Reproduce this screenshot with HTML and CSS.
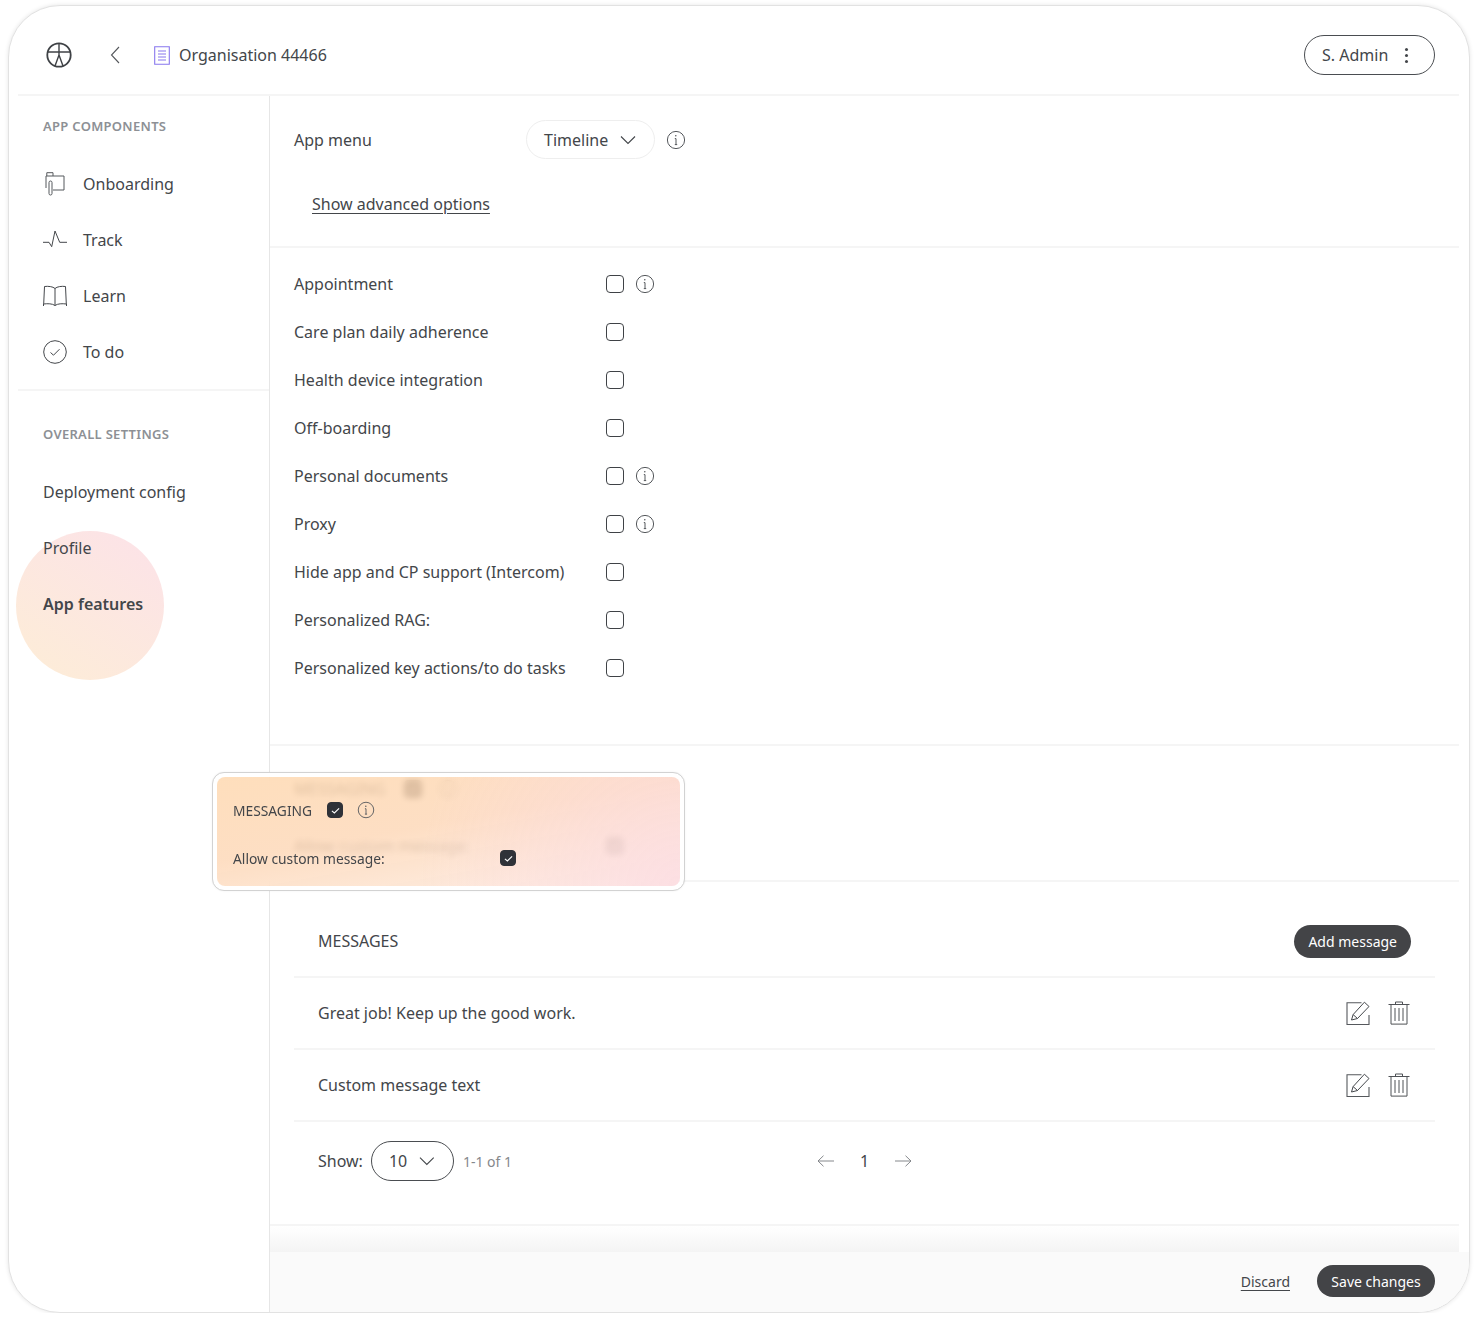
FILE: index.html
```html
<!DOCTYPE html>
<html lang="en">
<head>
    <meta charset="UTF-8">
    <title>App features</title>
    <link rel="stylesheet" href="styles.css">
</head>
<body>
    <svg class="sprites" width="0" height="0">
        <symbol id="info" viewBox="0 0 20 20">
            <circle cx="10" cy="10" r="8.6" fill="none" stroke="currentColor" stroke-width="1"/>
            <path d="M10 8.6v6M8.8 8.6H10M8.8 14.6h2.4" fill="none" stroke="currentColor" stroke-width="1"/>
            <circle cx="9.8" cy="5.8" r=".8" fill="currentColor"/>
        </symbol>
        <symbol id="chevron" viewBox="0 0 16 10">
            <path d="M1 1.5l7 7 7-7" fill="none" stroke="currentColor" stroke-width="1.1"/>
        </symbol>
        <symbol id="tick" viewBox="0 0 18 18">
            <path d="M5.2 9.4l2.6 2.2 5-4.8" fill="none" stroke="#fff" stroke-width="1.2"/>
        </symbol>
        <symbol id="edit" viewBox="0 0 24 24">
            <path d="M23 14v9.500H1V1.800h14.500" fill="none" stroke="#55585c" stroke-width="1.100"/>
            <path d="M5.500 19l1.600-5.400L18.400 1.200l4.600 4.300-11.500 12zM7.100 13.600l4.400 3.900" fill="none" stroke="#44474b" stroke-width="1"/>
        </symbol>
        <symbol id="trash" viewBox="0 0 22 24">
            <path d="M.5 3.500h21M3 3.500v19.600h16V3.500M7.500 3.200V1h7v2.200M7 7v13M11 7v13M15 7v13" fill="none" stroke="#4f5256" stroke-width="1"/>
        </symbol>
    </svg>

    <div class="frame">
        <header class="topbar">
            <svg class="logo" width="26" height="26" viewBox="0 0 26 26">
                <circle cx="13" cy="13" r="11.700" fill="none" stroke="#3f4246" stroke-width="1.800"/>
                <path d="M1.500 10h23M13 1.500V13.500M13 13L9 24M13 13l4 11" fill="none" stroke="#3f4246" stroke-width="1.400"/>
            </svg>
            <svg class="back" width="10" height="18" viewBox="0 0 10 18">
                <path d="M9 1L1.500 9 9 17" fill="none" stroke="#55585c" stroke-width="1.100"/>
            </svg>
            <svg class="doc" width="16" height="19" viewBox="0 0 16 19">
                <path d="M.7.7h14.600v17.600H.7zM4 5h8M4 8h8M4 11h8M4 14h8" fill="none" stroke="#8877ee" stroke-width="1.100"/>
            </svg>
            <span class="org-name">Organisation 44466</span>
            <button class="user-btn">S. Admin <span class="dots"><i></i><i></i><i></i></span></button>
        </header>

        <div class="layout">
            <aside class="sidebar">
                <div class="blob"></div>
                <div class="side-group">
                    <h4>APP COMPONENTS</h4>
                    <a class="side-item">
                        <svg width="24" height="24" viewBox="0 0 24 24">
                            <path d="M3 16V4M3.800 4V.7H10V4M3 4h18v14H10" fill="none" stroke="#55585c" stroke-width="1"/>
                            <rect x="6" y="9" width="3" height="14" rx="1.500" fill="none" stroke="#55585c" stroke-width="1"/>
                        </svg>
                        Onboarding
                    </a>
                    <a class="side-item">
                        <svg width="24" height="24" viewBox="0 0 24 24">
                            <path d="M0 14.300h6l2.700 4.400L12 3l4.700 11.300H24" fill="none" stroke="#44474b" stroke-width="1"/>
                        </svg>
                        Track
                    </a>
                    <a class="side-item">
                        <svg width="24" height="24" viewBox="0 0 24 24">
                            <path d="M12 4.500C10 2.500 5 2 1.500 2.500L.7 20c4-.5 8.500-.5 11.300 1.500 2.800-2 7.300-2 11.300-1.500l-.8-17.500C19 2 14 2.500 12 4.500zM12 4.500v17M.5 20v2M23.500 20v2" fill="none" stroke="#44474b" stroke-width="1"/>
                        </svg>
                        Learn
                    </a>
                    <a class="side-item">
                        <svg width="24" height="24" viewBox="0 0 24 24">
                            <circle cx="12" cy="12" r="11.300" fill="none" stroke="#44474b" stroke-width="1"/>
                            <path d="M7.500 12.500l3 2.700 6-6" fill="none" stroke="#44474b" stroke-width="1"/>
                        </svg>
                        To do
                    </a>
                </div>
                <div class="side-group">
                    <h4>OVERALL SETTINGS</h4>
                    <a class="side-item">Deployment config</a>
                    <a class="side-item">Profile</a>
                    <a class="side-item active">App features</a>
                </div>
            </aside>

            <main class="content">
                <section class="menu-section">
                    <div class="menu-row">
                        <span class="menu-label">App menu</span>
                        <div class="pill-select">Timeline <svg width="16" height="10"><use href="#chevron"/></svg></div>
                        <svg class="info" width="20" height="20"><use href="#info"/></svg>
                    </div>
                    <a class="advanced">Show advanced options</a>
                </section>

                <section class="features">
                    <div class="feature"><span>Appointment</span><b class="check"></b><svg class="info" width="20" height="20"><use href="#info"/></svg></div>
                    <div class="feature"><span>Care plan daily adherence</span><b class="check"></b></div>
                    <div class="feature"><span>Health device integration</span><b class="check"></b></div>
                    <div class="feature"><span>Off-boarding</span><b class="check"></b></div>
                    <div class="feature"><span>Personal documents</span><b class="check"></b><svg class="info" width="20" height="20"><use href="#info"/></svg></div>
                    <div class="feature"><span>Proxy</span><b class="check"></b><svg class="info" width="20" height="20"><use href="#info"/></svg></div>
                    <div class="feature"><span>Hide app and CP support (Intercom)</span><b class="check"></b></div>
                    <div class="feature"><span>Personalized RAG:</span><b class="check"></b></div>
                    <div class="feature"><span>Personalized key actions/to do tasks</span><b class="check"></b></div>
                </section>

                <section class="messaging">
                    <div class="msg-title">MESSAGING <b class="check on"><svg width="18" height="18"><use href="#tick"/></svg></b><svg class="info" width="20" height="20"><use href="#info"/></svg></div>
                    <div class="feature"><span>Allow custom message:</span><b class="check on"><svg width="18" height="18"><use href="#tick"/></svg></b></div>

                    <div class="callout">
                        <div class="callout-inner">
                            <div class="callout-row first">MESSAGING <b class="check small on"><svg width="17" height="17"><use href="#tick"/></svg></b><svg class="info" width="18" height="18"><use href="#info"/></svg></div>
                            <div class="callout-row"><span class="callout-label">Allow custom message:</span><b class="check small on"><svg width="17" height="17"><use href="#tick"/></svg></b></div>
                        </div>
                    </div>
                </section>

                <section class="messages">
                    <div class="msg-row head">
                        <span>MESSAGES</span>
                        <button class="dark-btn">Add message</button>
                    </div>
                    <div class="msg-row">
                        <span>Great job! Keep up the good work.</span>
                        <div class="actions">
                            <svg width="24" height="24"><use href="#edit"/></svg>
                            <svg width="22" height="24"><use href="#trash"/></svg>
                        </div>
                    </div>
                    <div class="msg-row">
                        <span>Custom message text</span>
                        <div class="actions">
                            <svg width="24" height="24"><use href="#edit"/></svg>
                            <svg width="22" height="24"><use href="#trash"/></svg>
                        </div>
                    </div>
                    <div class="pager">
                        <div class="pager-left">
                            <span>Show:</span>
                            <div class="pill-select dark">10 <svg width="16" height="10"><use href="#chevron"/></svg></div>
                            <span class="count">1-1 of 1</span>
                        </div>
                        <svg width="18" height="12" viewBox="0 0 18 12"><path d="M17 6H1M6.500.7L1 6l5.500 5.300" fill="none" stroke="#85888c" stroke-width="1"/></svg>
                        <span class="page-no">1</span>
                        <svg width="18" height="12" viewBox="0 0 18 12"><path d="M1 6h16M11.500.7L17 6l-5.500 5.300" fill="none" stroke="#85888c" stroke-width="1"/></svg>
                    </div>
                </section>

                <div class="fade"></div>
                <footer class="save-bar">
                    <a class="discard">Discard</a>
                    <button class="dark-btn">Save changes</button>
                </footer>
            </main>
        </div>
    </div>
</body>
</html>
```

FILE: styles.css
```css
* {
    box-sizing: border-box;
}
body {
    margin: 0;
    background: #fff;
    font-family: "Noto Sans", sans-serif;
    font-size: 16px;
    color: #43464a;
}
.sprites {
    position: absolute;
}
.frame {
    display: flex;
    flex-direction: column;
    width: 1462px;
    height: 1308px;
    margin: 5px 0 0 8px;
    padding: 0 10px 0 9px;
    background: #fff;
    border: 1px solid #e2e2e2;
    border-radius: 52px;
    box-shadow: 0 0 4px rgba(0, 0, 0, 0.1);
    overflow: hidden;
}

/* top bar */
.topbar {
    display: flex;
    align-items: center;
    flex: none;
    height: 90px;
    padding: 10px 24px 0 28px;
    border-bottom: 2px solid #f5f5f5;
}
.back {
    margin-left: 38px;
}
.doc {
    margin-left: 34px;
}
.org-name {
    margin-left: 9px;
}
.user-btn {
    display: flex;
    align-items: center;
    justify-content: space-between;
    width: 131px;
    height: 40px;
    margin-left: auto;
    padding: 0 26px 0 17px;
    font: inherit;
    color: inherit;
    background: #fff;
    border: 1px solid #4a4d51;
    border-radius: 20px;
}
.dots {
    display: flex;
    flex-direction: column;
    gap: 3px;
}
.dots i {
    width: 3px;
    height: 3px;
    background: #43464a;
    border-radius: 50%;
}

.layout {
    display: flex;
    flex: 1;
    min-height: 0;
}

/* sidebar */
.sidebar {
    position: relative;
    flex: none;
    width: 252px;
    border-right: 1px solid #e6e6e6;
}
.blob {
    position: absolute;
    left: -2px;
    top: 435px;
    width: 148px;
    height: 149px;
    background: linear-gradient(215deg, #fce3e7 10%, #fdecd8 90%);
    border-radius: 50%;
}
.side-group {
    position: relative;
    height: 295px;
    padding: 21px 0 0 25px;
    border-bottom: 2px solid #f5f5f5;
}
.side-group:last-child {
    height: auto;
    padding-top: 34px;
    border-bottom: none;
}
.side-group h4 {
    margin: 0 0 21px;
    font-size: 13px;
    font-weight: 600;
    line-height: 18px;
    letter-spacing: 0.3px;
    color: #8d9095;
}
.side-item {
    display: flex;
    align-items: center;
    gap: 16px;
    height: 56px;
}
.side-item.active {
    font-weight: 600;
}

/* main */
.content {
    display: flex;
    flex-direction: column;
    flex: 1;
    min-width: 0;
}
.menu-section {
    height: 152px;
    padding: 24px 0 0 24px;
    border-bottom: 2px solid #f5f5f5;
}
.menu-row {
    display: flex;
    align-items: center;
}
.menu-label {
    width: 232px;
}
.pill-select {
    display: flex;
    align-items: center;
    gap: 12px;
    height: 39px;
    padding: 0 18px 0 17px;
    background: #fff;
    border: 1px solid #eeeeee;
    border-radius: 20px;
}
.pill-select.dark {
    width: 83px;
    height: 40px;
    border-color: #4a4d51;
}
.info {
    flex: none;
    margin-left: 11px;
    color: #55585c;
}
.advanced {
    display: block;
    margin: 34px 0 0 18px;
    line-height: 22px;
    text-decoration: underline;
    text-underline-offset: 3px;
    text-decoration-thickness: 1px;
}
.features {
    height: 498px;
    padding: 12px 0 0 24px;
    border-bottom: 2px solid #f5f5f5;
}
.feature {
    display: flex;
    align-items: center;
    height: 48px;
}
.feature span {
    width: 312px;
}
.check {
    display: block;
    flex: none;
    width: 18px;
    height: 18px;
    background: #fff;
    border: 1px solid #3f4246;
    border-radius: 4px;
}
.check.on {
    background: #2f3238;
    border-color: #2f3238;
}
.check svg {
    display: block;
    margin: -1px;
}

/* messaging + highlighted callout */
.messaging {
    position: relative;
    height: 136px;
    padding: 31px 0 0 24px;
    border-bottom: 2px solid #f5f5f5;
}
.msg-title {
    display: flex;
    align-items: center;
    height: 24px;
}
.msg-title .check {
    margin-left: 18px;
}
.msg-title .info {
    margin-left: 16px;
}
.messaging .feature {
    height: 24px;
    margin-top: 33px;
}
.callout {
    position: absolute;
    left: -57px;
    top: 27px;
    width: 471px;
    height: 117px;
    border: 4px solid #fff;
    border-radius: 11px;
    outline: 1px solid #d2d2d2;
    box-shadow: 0 0 3px rgba(0, 0, 0, 0.12);
}
.callout-inner {
    height: 109px;
    padding: 21px 16px 0;
    font-size: 13.8px;
    background:
        radial-gradient(circle at 100% 100%, rgba(252, 219, 226, 0.8), rgba(252, 219, 226, 0) 55%),
        linear-gradient(170deg, rgba(254, 216, 175, 0.84) 0%, rgba(253, 216, 184, 0.84) 45%, rgba(253, 236, 226, 0.86) 100%);
    border-radius: 8px;
    backdrop-filter: blur(3px);
}
.callout-row {
    display: flex;
    align-items: center;
    height: 24px;
}
.callout-row.first {
    margin-bottom: 24px;
}
.callout-row.first .check {
    margin-left: 15px;
}
.callout-label {
    width: 267px;
}
.check.small {
    width: 16px;
    height: 16px;
}
.callout-row .info {
    margin-left: 14px;
}

/* messages table */
.messages {
    height: 344px;
    padding: 24px 24px 0;
    border-bottom: 2px solid #f5f5f5;
}
.msg-row {
    display: flex;
    align-items: center;
    justify-content: space-between;
    height: 72px;
    padding: 0 24px;
    border-bottom: 2px solid #f5f5f5;
}
.actions {
    display: flex;
    align-items: center;
    gap: 18px;
    padding-right: 1px;
}
.dark-btn {
    height: 33px;
    padding: 0 14px;
    font: inherit;
    font-size: 14px;
    color: #fff;
    background: #434447;
    border: none;
    border-radius: 17px;
}
.save-bar .dark-btn {
    width: 118px;
    height: 32px;
    padding: 0;
}
.pager {
    display: flex;
    align-items: center;
    height: 78px;
    padding-left: 24px;
}
.pager-left {
    display: flex;
    align-items: center;
    width: 499px;
    gap: 8px;
}
.count {
    margin-left: 1px;
    font-size: 14px;
    color: #85888c;
}
.page-no {
    width: 59px;
    text-align: center;
}

/* bottom save bar */
.fade {
    flex: none;
    height: 26px;
    background: linear-gradient(#fff, #f4f4f4);
}
.save-bar {
    display: flex;
    align-items: center;
    justify-content: flex-end;
    gap: 27px;
    flex: 1;
    margin-right: -10px;
    padding: 0 34px 2px 0;
    background: #fafafa;
}
.discard {
    font-size: 14px;
    text-decoration: underline;
    text-underline-offset: 3px;
    text-decoration-thickness: 1px;
}
```
